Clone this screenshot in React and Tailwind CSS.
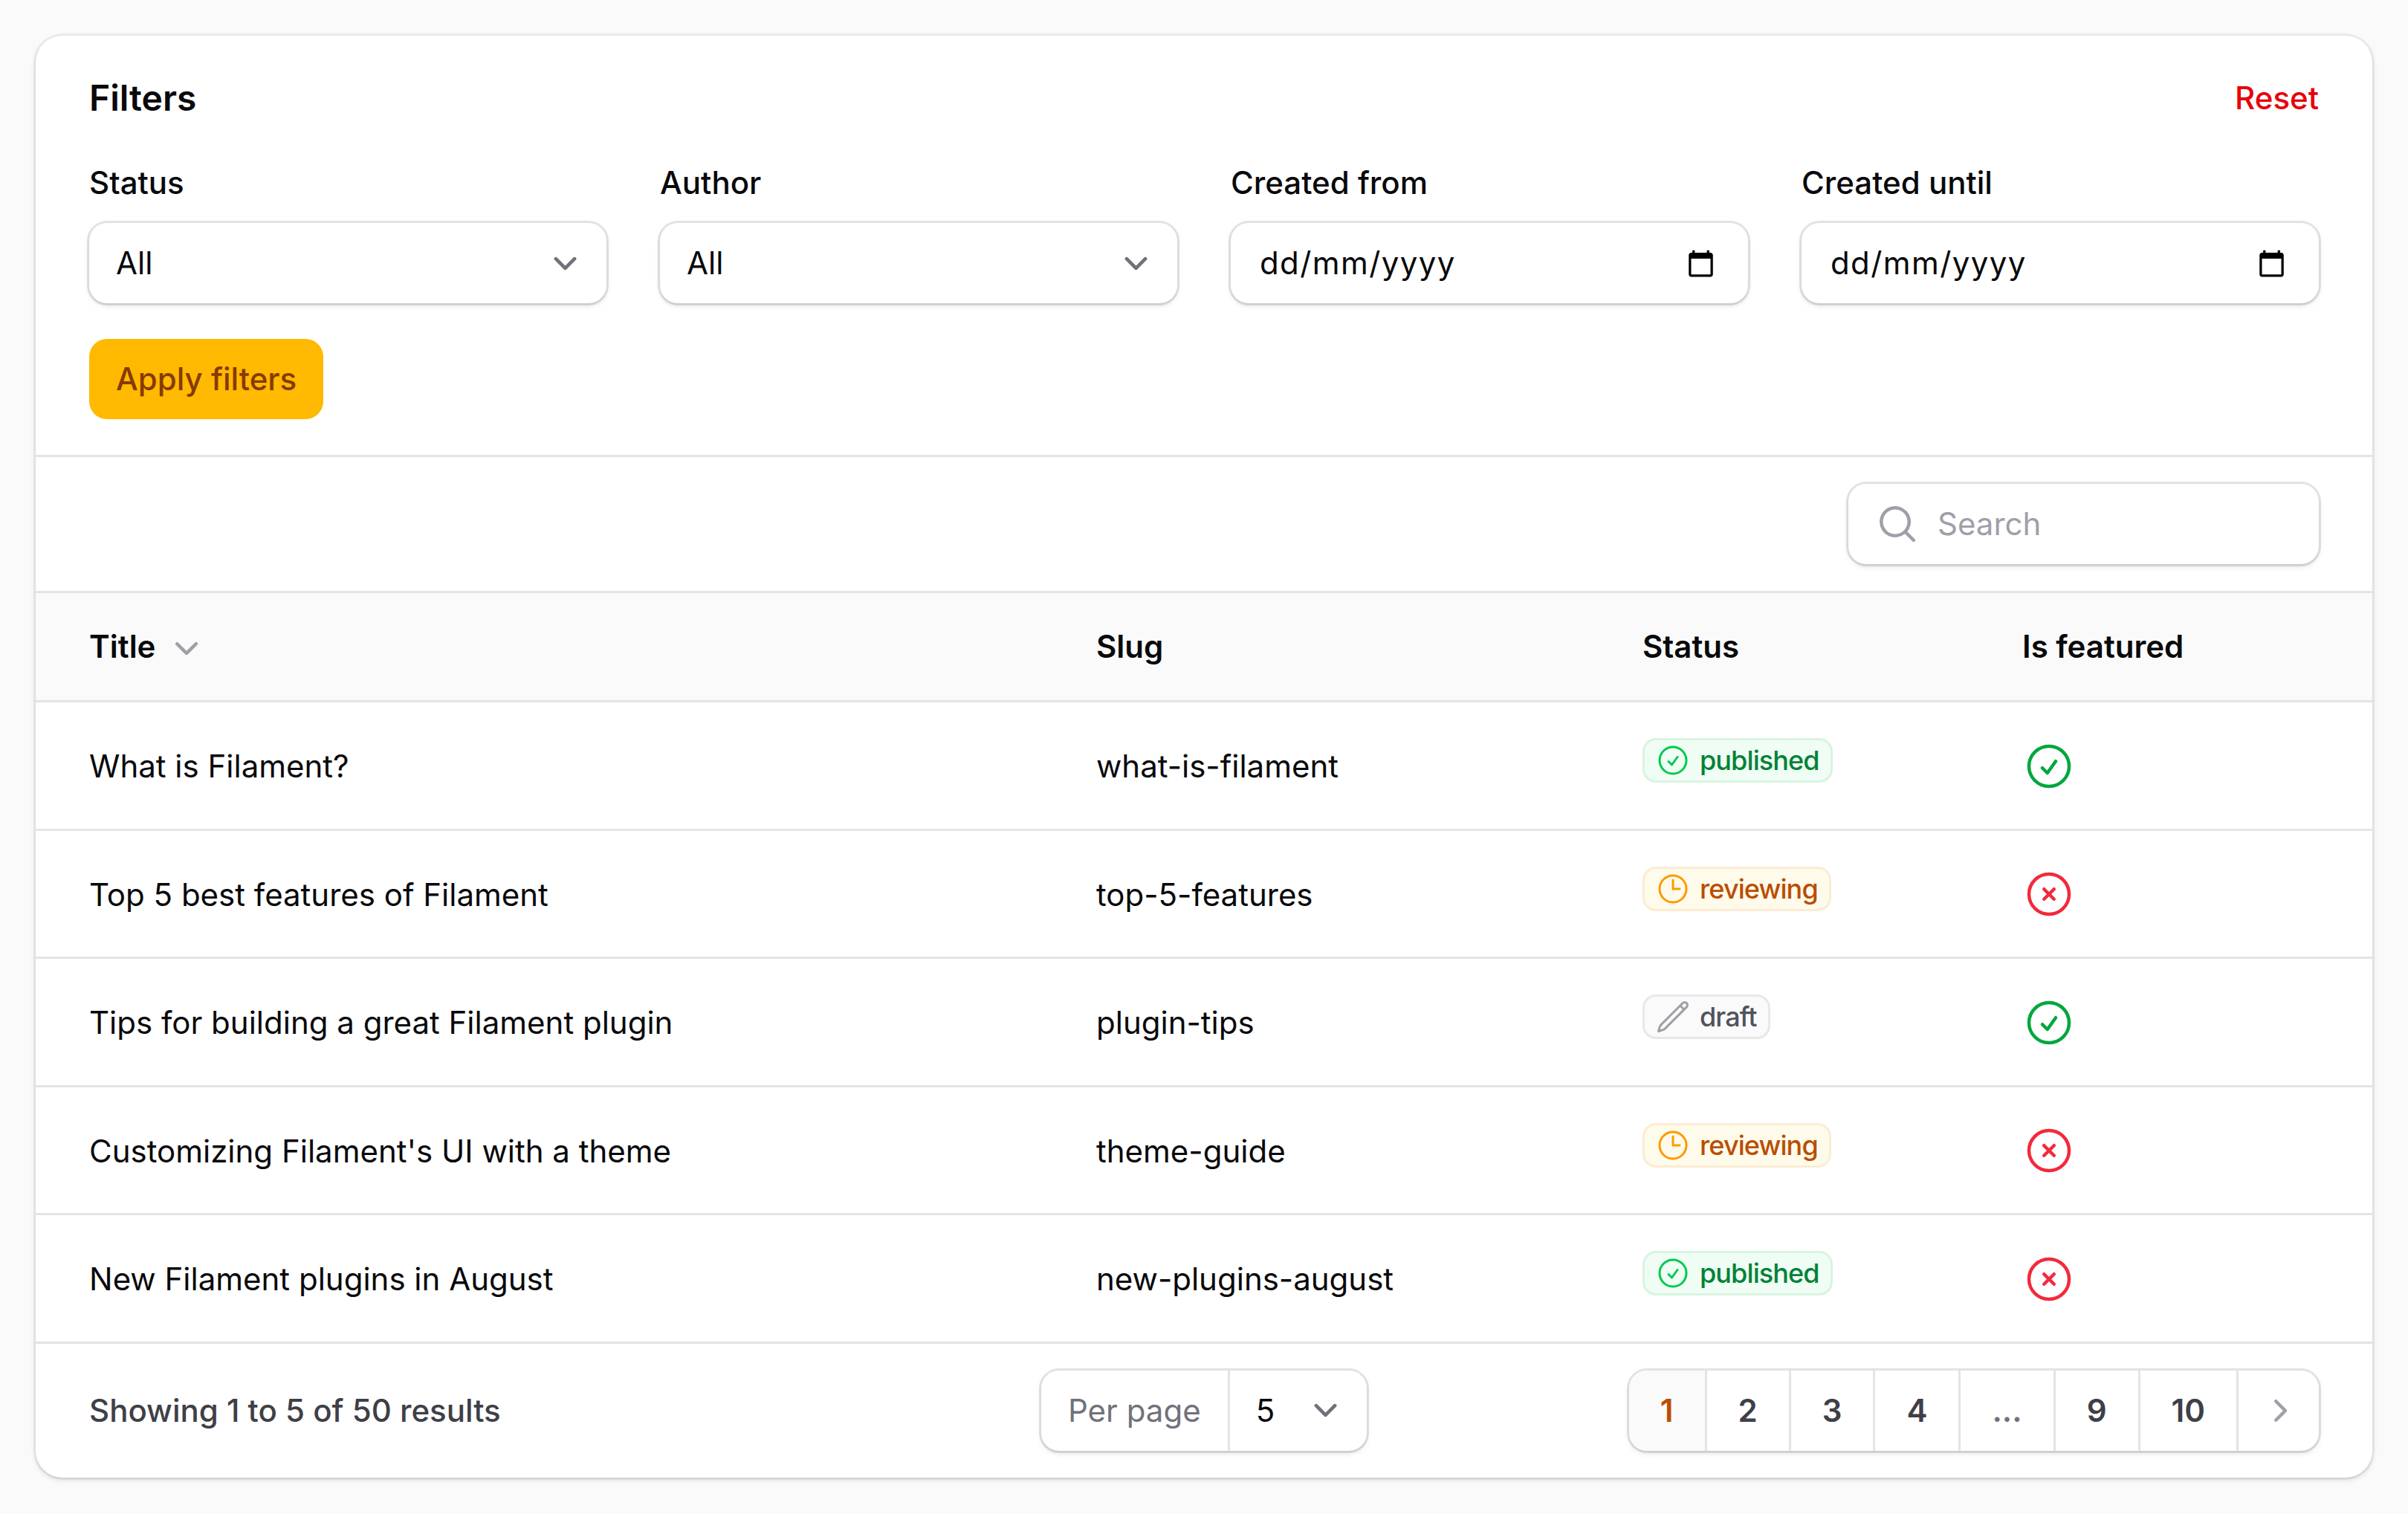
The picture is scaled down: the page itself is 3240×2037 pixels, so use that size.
import { HiOutlineCheckCircle, HiOutlineXCircle, HiOutlineClock, HiOutlinePencil, HiMiniMagnifyingGlass, HiMiniChevronDown, HiMiniChevronRight } from 'react-icons/hi2';

const posts = [
  { title: 'What is Filament?', slug: 'what-is-filament', status: 'published', featured: true },
  { title: 'Top 5 best features of Filament', slug: 'top-5-features', status: 'reviewing', featured: false },
  { title: 'Tips for building a great Filament plugin', slug: 'plugin-tips', status: 'draft', featured: true },
  { title: "Customizing Filament's UI with a theme", slug: 'theme-guide', status: 'reviewing', featured: false },
  { title: 'New Filament plugins in August', slug: 'new-plugins-august', status: 'published', featured: false },
];

const badges = {
  published: { icon: HiOutlineCheckCircle, box: 'bg-green-50 text-green-700 ring-green-600/10', iconColor: 'text-green-500' },
  reviewing: { icon: HiOutlineClock, box: 'bg-amber-50 text-amber-700 ring-amber-600/10', iconColor: 'text-amber-500' },
  draft: { icon: HiOutlinePencil, box: 'bg-zinc-50 text-zinc-600 ring-zinc-600/10', iconColor: 'text-zinc-400' },
};

const shadow = 'shadow-[0_3px_9px_0_rgb(0_0_0/0.1),0_3px_6px_-3px_rgb(0_0_0/0.1)]';
const field = `bg-white rounded-[24px] ring-[3px] ring-zinc-950/10 ${shadow}`;

function SelectArrow() {
  return (
    <svg viewBox="0 0 20 20" fill="none" className="w-[63px] h-[63px] shrink-0 text-zinc-500">
      <path d="M6 8l4 4 4-4" stroke="currentColor" strokeWidth="1.5" strokeLinecap="round" strokeLinejoin="round" />
    </svg>
  );
}

function CalendarIcon() {
  return (
    <svg viewBox="0 0 24 24" className="w-[39px] h-[39px] shrink-0 text-black" fill="currentColor">
      <path d="M20 3h-1V1h-2v2H7V1H5v2H4c-1.1 0-2 .9-2 2v16c0 1.1.9 2 2 2h16c1.1 0 2-.9 2-2V5c0-1.1-.9-2-2-2zm0 18H4V8h16v13z" />
    </svg>
  );
}

function SelectFilter({ label }) {
  return (
    <div className="flex flex-col gap-[24px]">
      <span className="font-medium leading-[60px]">{label}</span>
      <div className={`${field} h-[108px] flex items-center justify-between pl-[36px] pr-[24px]`}>
        <span>All</span>
        <SelectArrow />
      </div>
    </div>
  );
}

function DateFilter({ label }) {
  return (
    <div className="flex flex-col gap-[24px]">
      <span className="font-medium leading-[60px]">{label}</span>
      <div className={`${field} h-[108px] flex items-center justify-between pl-[39px] pr-[44px]`}>
        <span className="tracking-[1.4px]">dd/mm/yyyy</span>
        <CalendarIcon />
      </div>
    </div>
  );
}

function StatusBadge({ status }) {
  const { icon: Icon, box, iconColor } = badges[status];
  return (
    <span className={`inline-flex items-center gap-[12px] pl-[17px] pr-[18px] py-[6px] rounded-[18px] ring-[3px] ring-inset text-[36px] leading-[48px] tracking-tight font-medium mb-[16px] ${box}`}>
      <Icon className={`w-[48px] h-[48px] ${iconColor}`} />
      {status}
    </span>
  );
}

export default function App() {
  return (
    <div className="min-h-screen bg-[#fafafa] p-12 font-['Inter',sans-serif] text-[42px] leading-[60px] text-zinc-950 antialiased">
      <div className={`bg-white rounded-[36px] ring-[3px] ring-zinc-950/5 ${shadow}`}>
        {/* Filters */}
        <div className="px-[72px] pt-12 pb-12 border-b-[3px] border-zinc-200">
          <div className="flex items-center justify-between h-[72px]">
            <h2 className="text-[48px] leading-[72px] font-semibold">Filters</h2>
            <button className="font-medium text-red-600">Reset</button>
          </div>
          <div className="grid grid-cols-4 gap-[72px] mt-12">
            <SelectFilter label="Status" />
            <SelectFilter label="Author" />
            <DateFilter label="Created from" />
            <DateFilter label="Created until" />
          </div>
          <button className="mt-12 h-[108px] px-[36px] rounded-[24px] bg-amber-400 text-[#873a03] font-medium block">Apply filters</button>
        </div>

        {/* Toolbar */}
        <div className="flex justify-end px-[72px] py-[36px] border-b-[3px] border-zinc-200">
          <div className={`${field} w-[633px] h-[108px] flex items-center gap-[24px] pl-[36px]`}>
            <HiMiniMagnifyingGlass className="w-[60px] h-[60px] text-zinc-400" />
            <span className="text-zinc-400">Search</span>
          </div>
        </div>

        {/* Table */}
        <table className="w-full table-fixed border-separate border-spacing-0 text-left">
          <thead>
            <tr className="bg-zinc-50">
              <th className="w-[1355px] h-[147px] px-[72px] font-semibold border-b-[3px] border-zinc-200">
                <span className="flex items-center gap-[12px]">
                  Title
                  <HiMiniChevronDown className="w-[60px] h-[60px] text-zinc-400" />
                </span>
              </th>
              <th className="w-[735px] px-[72px] font-semibold border-b-[3px] border-zinc-200">Slug</th>
              <th className="w-[511px] px-[72px] font-semibold border-b-[3px] border-zinc-200">Status</th>
              <th className="px-[72px] font-semibold border-b-[3px] border-zinc-200">Is featured</th>
            </tr>
          </thead>
          <tbody>
            {posts.map((post) => (
              <tr key={post.slug}>
                <td className="h-[172.5px] px-[72px] pt-[3px] border-b-[3px] border-zinc-200">{post.title}</td>
                <td className="px-[72px] pt-[3px] border-b-[3px] border-zinc-200">{post.slug}</td>
                <td className="px-[72px] pt-[3px] border-b-[3px] border-zinc-200">
                  <StatusBadge status={post.status} />
                </td>
                <td className="px-[72px] pt-[2px] border-b-[3px] border-zinc-200">
                  {post.featured ? (
                    <HiOutlineCheckCircle className="w-[72px] h-[72px] text-green-600" />
                  ) : (
                    <HiOutlineXCircle className="w-[72px] h-[72px] text-[#f3293c]" />
                  )}
                </td>
              </tr>
            ))}
          </tbody>
        </table>

        {/* Footer */}
        <div className="flex items-center justify-between px-[72px] py-[36px]">
          <span className="font-medium text-zinc-700 w-[1281px] shrink-0">Showing 1 to 5 of 50 results</span>
          <div className={`${field} h-[108px] flex items-center w-[438px]`}>
            <span className="px-[36px] text-zinc-500 h-full flex items-center border-r-[3px] border-zinc-200">Per page</span>
            <div className="flex-1 flex items-center justify-between pl-[35px] pr-[24px]">
              <span>5</span>
              <SelectArrow />
            </div>
          </div>
          <div className={`${field} h-[108px] flex items-stretch overflow-hidden ml-auto`}>
            {['1', '2', '3', '4', '...', '9', '10'].map((p, i) => (
              <span
                key={p}
                className={`flex items-center px-[42px] font-semibold border-r-[3px] border-zinc-200 ${i === 0 ? 'bg-zinc-50 text-amber-700' : i === 4 ? 'text-zinc-500' : 'text-zinc-700'}`}
              >
                {p}
              </span>
            ))}
            <span className="flex items-center px-[24px]">
              <HiMiniChevronRight className="w-[60px] h-[60px] text-zinc-400" />
            </span>
          </div>
        </div>
      </div>
    </div>
  );
}
